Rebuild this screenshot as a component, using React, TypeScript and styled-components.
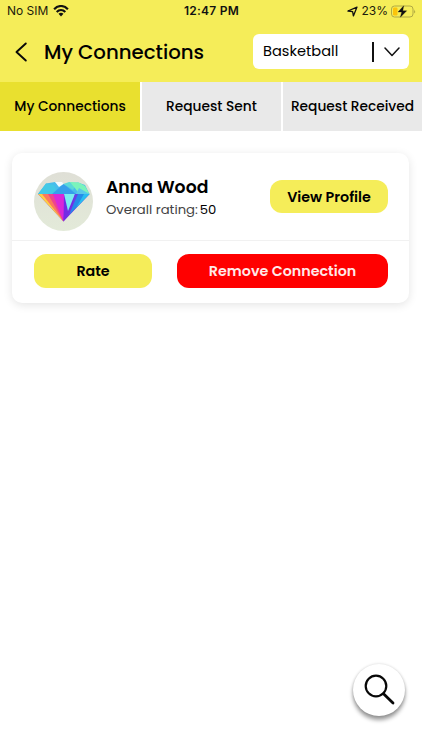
import React from 'react';
import styled, { createGlobalStyle } from 'styled-components';

const GlobalStyle = createGlobalStyle`
  * { box-sizing: border-box; }
  body { margin: 0; background: #fff; }
  button { font: inherit; border: 0; padding: 0; margin: 0; color: inherit; background: none; }
  svg { display: block; flex: none; }
`;

const Screen = styled.main`
  position: relative;
  width: 422px;
  height: 750px;
  overflow: hidden;
  background: #fff;
  color: #000;
  font-family: Poppins, Inter, sans-serif;
`;

const Header = styled.header`
  height: 82px;
  background: #f5ed59;
`;

const StatusBar = styled.div`
  display: grid;
  grid-template-columns: 1fr auto 1fr;
  align-items: center;
  height: 22px;
  padding: 0 6px 0 7px;
  font-family: Inter, sans-serif;
  font-size: 12px;
  line-height: 22px;
  color: #1c1b0c;
`;

const StatusGroup = styled.div<{ $end?: boolean }>`
  display: flex;
  align-items: center;
  gap: ${({ $end }) => ($end ? 3 : 5)}px;
  justify-content: ${({ $end }) => ($end ? 'flex-end' : 'flex-start')};
`;

const Clock = styled.span`
  font-weight: 600;
  letter-spacing: 0.25px;
  color: #111;
`;

const TitleBar = styled.div`
  display: flex;
  align-items: center;
  height: 60px;
  padding: 0 13px 1px 14px;
`;

const Title = styled.h1`
  flex: 1;
  margin: 0 0 0 16px;
  font-size: 19.75px;
  font-weight: 500;
  line-height: 30px;
  white-space: nowrap;
`;

const SportSelect = styled.button`
  display: flex;
  align-items: center;
  width: 156px;
  height: 35px;
  padding: 0 9px 0 10px;
  border-radius: 6px;
  background: #fff;
  font-size: 14.6px;
  text-align: left;
`;

const Divider = styled.span`
  width: 2px;
  height: 20px;
  margin: 0 10px 0 auto;
  background: #111;
`;

const Tabs = styled.nav`
  display: grid;
  grid-template-columns: 140px 139px 139px;
  column-gap: 2px;
  height: 49px;
`;

const Tab = styled.button<{ $active?: boolean }>`
  background: ${({ $active }) => ($active ? '#e9e02f' : '#e9e9e9')};
  font-size: 13.75px;
  font-weight: 500;
  white-space: nowrap;
`;

const Card = styled.article`
  width: 397px;
  height: 150px;
  margin: 22px 0 0 12px;
  border-radius: 10px;
  background: #fff;
  box-shadow: 0 2px 10px rgba(0, 0, 0, 0.11);
`;

const Profile = styled.div`
  display: flex;
  align-items: flex-start;
  height: 88px;
  padding: 19px 21px 0 22px;
  border-bottom: 1px solid #f1f1f1;
`;

const Details = styled.div`
  flex: 1;
  margin: 3px 0 0 13px;
`;

const Name = styled.h2`
  margin: 0;
  font-size: 17.25px;
  font-weight: 600;
  line-height: 24px;
  white-space: nowrap;
`;

const Rating = styled.p`
  display: flex;
  gap: 2px;
  margin: 0;
  font-size: 13.2px;
  line-height: 22px;
  white-space: nowrap;
  color: #444;
`;

const Score = styled.span`
  color: #000;
`;

const Action = styled.button<{ $width: number; $danger?: boolean }>`
  width: ${({ $width }) => $width}px;
  height: 34px;
  border-radius: 12px;
  background: ${({ $danger }) => ($danger ? '#ff0000' : '#f5ed59')};
  color: ${({ $danger }) => ($danger ? '#ffe9e9' : '#000')};
  font-size: 14.3px;
  font-weight: 600;
  white-space: nowrap;
`;

const ProfileAction = styled(Action)`
  height: 33px;
  margin-top: 8px;
  padding-top: 1px;
`;

const Actions = styled.div`
  display: flex;
  justify-content: space-between;
  padding: 13px 21px 0 22px;
`;

const SearchButton = styled.button`
  position: absolute;
  left: 353px;
  top: 664px;
  display: grid;
  place-items: center;
  width: 52px;
  height: 52px;
  border-radius: 50%;
  background: #fff;
  box-shadow: 0 4px 4px rgba(0, 0, 0, 0.4), 0 0 3px rgba(0, 0, 0, 0.16);
`;

const WifiIcon = () => (
  <svg width="16" height="12" viewBox="0 0 16 12">
    <g fill="none" stroke="#111" strokeWidth="2.1">
      <path d="M1.1 4.2C5-.1 11-.1 14.9 4.2" />
      <path d="M3.7 7C6.2 4.3 9.8 4.3 12.3 7" />
    </g>
    <path d="M5.5 8.8Q8 6.9 10.5 8.8L8 11.4Z" fill="#111" />
  </svg>
);

const LocationIcon = () => (
  <svg width="11" height="11" viewBox="0 0 11 11">
    <path d="M.9 5L10 1.1L6.4 9.9L5.6 5.6Z" fill="none" stroke="#111" strokeWidth="1.3" strokeLinejoin="round" />
  </svg>
);

const BatteryIcon = () => (
  <svg width="25" height="13" viewBox="0 0 25 13">
    <rect x=".5" y="1" width="21.5" height="11" rx="3" fill="none" stroke="#b0a944" />
    <rect x="2" y="2.5" width="4.5" height="8" rx="1.2" fill="#fbc40b" />
    <path d="M23.3 4.5Q24.8 6.5 23.3 8.5Z" fill="#98933a" />
    <path d="M12.7.8L7 7H10.7L9.4 12.2L15.7 5.8H11.8Z" fill="#111" stroke="#111" strokeWidth=".3" />
  </svg>
);

const DiamondAvatar = () => (
  <svg width="59" height="59" viewBox="0 0 59 59">
    <defs>
      <linearGradient id="backdrop" x1="0" y1="0" x2="0" y2="1">
        <stop stopColor="#dfdfd6" />
        <stop offset="1" stopColor="#e3ead9" />
      </linearGradient>
    </defs>
    <circle cx="29.5" cy="29.5" r="29.5" fill="url(#backdrop)" />
    <path d="M4 22L12 11.5L21 10L29.5 12L44 10.5L51 13L55.5 22Z" fill="#48bdec" />
    <path d="M4 22L12 11.5L20 13L24 22Z" fill="#43c9e6" />
    <path d="M18 22L29.5 12L42 22Z" fill="#369feb" />
    <path d="M21 10H28L29.5 12L25 15Z" fill="#f4fbff" />
    <path d="M29.5 12L35 10L43 11L39 18Z" fill="#5bd9d8" />
    <path d="M36 10L45 10.5L51 14L55.5 22L44 20Z" fill="#7bf4bb" />
    <path d="M42 22L45 16L55.5 22Z" fill="#58c8ea" />
    <path d="M4 22H55.5L29.5 49.5Z" fill="#742be4" />
    <path d="M4 22H14L29.5 49.5Z" fill="#ffcd44" />
    <path d="M8 22H17L29.5 49.5Z" fill="#fb785e" />
    <path d="M14 22H24L29.5 49.5Z" fill="#ee438f" />
    <path d="M19 22H31L29.5 49.5L24 36Z" fill="#d928d8" />
    <path d="M30 22H43L29.5 49.5Z" fill="#742be4" />
    <path d="M30 22H41L34 39Z" fill="#79eef0" />
    <path d="M41 22H47L29.5 49.5L38 35Z" fill="#6542e5" />
    <path d="M44 22H55.5L35 43Z" fill="#258be9" />
    <path d="M50 22H55.5L42 36Z" fill="#28bdf0" />
  </svg>
);

export default function App() {
  return (
    <>
      <GlobalStyle />
      <Screen>
        <Header>
          <StatusBar>
            <StatusGroup><span>No SIM</span><WifiIcon /></StatusGroup>
            <Clock>12:47 PM</Clock>
            <StatusGroup $end><LocationIcon /><span>23%</span><BatteryIcon /></StatusGroup>
          </StatusBar>
          <TitleBar>
            <svg width="14" height="20" viewBox="0 0 14 20" fill="none" stroke="#080808" strokeWidth="1.9" strokeLinecap="round" strokeLinejoin="round">
              <path d="M11.8 1.5L2.5 10L11.8 18.5" />
            </svg>
            <Title>My Connections</Title>
            <SportSelect>
              <span>Basketball</span>
              <Divider />
              <svg width="16" height="10" viewBox="0 0 16 10" fill="none" stroke="#111" strokeWidth="1.5" strokeLinecap="round" strokeLinejoin="round">
                <path d="M1 1L8 8.5L15 1" />
              </svg>
            </SportSelect>
          </TitleBar>
        </Header>
        <Tabs>
          <Tab $active>My Connections</Tab>
          <Tab>Request Sent</Tab>
          <Tab>Request Received</Tab>
        </Tabs>
        <Card>
          <Profile>
            <DiamondAvatar />
            <Details>
              <Name>Anna Wood</Name>
              <Rating><span>Overall rating:</span><Score>50</Score></Rating>
            </Details>
            <ProfileAction $width={118}>View Profile</ProfileAction>
          </Profile>
          <Actions>
            <Action $width={118}>Rate</Action>
            <Action $width={211} $danger>Remove Connection</Action>
          </Actions>
        </Card>
        <SearchButton aria-label="Search">
          <svg width="32" height="32" viewBox="0 0 32 32" fill="none" stroke="#080808" strokeWidth="2.2" strokeLinecap="round">
            <circle cx="13" cy="12" r="10.3" />
            <path d="M20.5 19.7L30 29" strokeWidth="2.8" />
          </svg>
        </SearchButton>
      </Screen>
    </>
  );
}
